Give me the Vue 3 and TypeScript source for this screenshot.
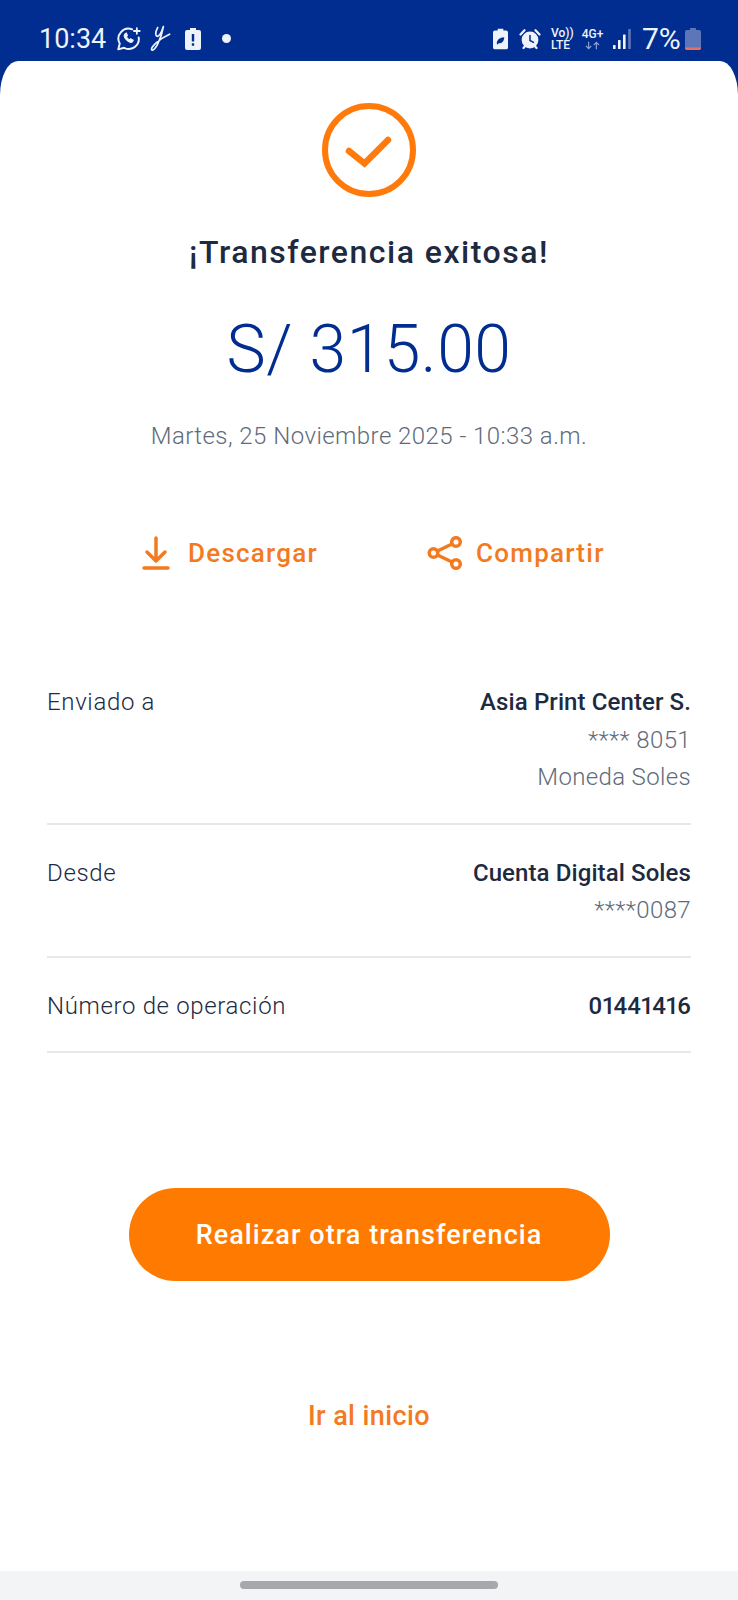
<script setup lang="ts">
interface DetailRow {
  label: string
  strong: string
  lines: string[]
}

const rows: DetailRow[] = [
  { label: 'Enviado a', strong: 'Asia Print Center S.', lines: ['**** 8051', 'Moneda Soles'] },
  { label: 'Desde', strong: 'Cuenta Digital Soles', lines: ['****0087'] },
  { label: 'Número de operación', strong: '01441416', lines: [] },
]
</script>

<template>
  <div class="screen">
    <header class="status">
      <div class="status-left">
        <span class="clock">10:34</span>
        <svg class="ic-wa" viewBox="0 0 24 24" fill="none" stroke="currentColor" stroke-width="1.9" stroke-linejoin="round" stroke-linecap="round">
          <path d="M15.5 3.2A9.6 9.6 0 0 0 3.6 16.8L2.2 22.4l5.6-1.5A9.6 9.6 0 0 0 21.8 11" />
          <path d="M8.6 7.6c-1.3 1-1.1 3 1.2 5.5 2.4 2.5 4.6 3.1 6 2l.8-1.5-2.6-1.4-1 1c-1.2-.4-2.5-1.7-3-3l1-1-1-2.6z" fill="currentColor" stroke-width="1" />
          <path d="M20 2v5.5M17.2 4.8h5.6" stroke-width="1.7" />
        </svg>
        <svg class="ic-y" viewBox="0 0 22 28" fill="none" stroke="currentColor" stroke-width="1.8" stroke-linecap="round" stroke-linejoin="round">
          <path d="M8 2.5C6.2 6 5.5 10 7 11.5c2 1.3 5-3 7-10-1.2 7.5-3.5 13.5-6 18.5-1.5 3-4.5 7-6 6-1.3-1 1-4.5 5-8 3.5-3 8-6 13.5-8.5" />
        </svg>
        <svg class="ic-batt" viewBox="0 0 16 22">
          <path d="M5 0h6v2h3a2 2 0 0 1 2 2v16a2 2 0 0 1-2 2H2a2 2 0 0 1-2-2V4a2 2 0 0 1 2-2h3z" fill="currentColor" />
          <rect x="6.8" y="6" width="2.4" height="7.5" rx="0.6" fill="#002d8f" />
          <rect x="6.8" y="15.2" width="2.4" height="2.6" rx="0.6" fill="#002d8f" />
        </svg>
        <span class="dot"></span>
      </div>
      <div class="status-right">
        <svg class="ic-saver" viewBox="0 0 16 22">
          <path d="M5 0h6v2h3a2 2 0 0 1 2 2v16a2 2 0 0 1-2 2H2a2 2 0 0 1-2-2V4a2 2 0 0 1 2-2h3z" fill="currentColor" />
          <path d="M4 15.5c.4-4 2.8-6 8-6.5-.3 4.5-2.6 6.8-6 6.5l-1.2 1.5z" fill="#002d8f" />
        </svg>
        <svg class="ic-alarm" viewBox="0 0 22 22">
          <circle cx="11" cy="12" r="8.4" fill="currentColor" />
          <path d="M11 7.5V12.5l3.5 1.8" fill="none" stroke="#002d8f" stroke-width="1.5" stroke-linecap="round" />
          <path d="M1.5 6.5 5.5 2.2M20.5 6.5 16.5 2.2M4.5 20l1.5-1.7M17.5 20 16 18.3" fill="none" stroke="currentColor" stroke-width="2.2" stroke-linecap="round" />
        </svg>
        <div class="net-volte"><span>Vo))</span><span>LTE</span></div>
        <div class="net-4g">
          <span>4G+</span>
          <svg viewBox="0 0 22 10" fill="none" stroke="#8fa3d6" stroke-width="1.5">
            <path d="M6 0v9M2.5 5.5 6 9l3.5-3.5M16 10V1M12.5 4.5 16 1l3.5 3.5" />
          </svg>
        </div>
        <svg class="ic-signal" viewBox="0 0 18 20">
          <rect x="0" y="16" width="2.6" height="4" rx="0.6" fill="#f2f5fc" />
          <rect x="5" y="11" width="2.6" height="9" rx="0.6" fill="#f2f5fc" />
          <rect x="10" y="5.5" width="2.6" height="14.5" rx="0.6" fill="#f2f5fc" />
          <rect x="15.2" y="0" width="2.6" height="20" rx="0.6" fill="#5d76b8" />
        </svg>
        <span class="pct">7%</span>
        <svg class="ic-level" viewBox="0 0 16 22">
          <path d="M5 0h6v2h3a2 2 0 0 1 2 2v16a2 2 0 0 1-2 2H2a2 2 0 0 1-2-2V4a2 2 0 0 1 2-2h3z" fill="#5d76b8" />
          <path d="M0 19.5h16V20a2 2 0 0 1-2 2H2a2 2 0 0 1-2-2z" fill="#ec6f5c" />
        </svg>
      </div>
    </header>

    <main class="card">
      <svg class="ok" viewBox="0 0 94 94" fill="none" stroke="#ff7a0a" stroke-linecap="round" stroke-linejoin="miter">
        <circle cx="47" cy="47" r="44" stroke-width="6" />
        <path d="M27 48 42.5 60.5 66 37" stroke-width="6.5" />
      </svg>
      <h1 class="title">¡Transferencia exitosa!</h1>
      <div class="amount">S/ 315.00</div>
      <div class="date">Martes, 25 Noviembre 2025 - 10:33 a.m.</div>

      <div class="actions">
        <a class="action action-down">
          <svg viewBox="0 0 28 34" fill="none" stroke="currentColor" stroke-width="3.5" stroke-linecap="round" stroke-linejoin="round">
            <path d="M14 2v23M5 16l9 9 9-9" />
            <path d="M2 32h24" />
          </svg>
          <span>Descargar</span>
        </a>
        <a class="action action-share">
          <svg viewBox="0 0 36 34" fill="none" stroke="currentColor" stroke-width="3.5">
            <circle cx="6.5" cy="17" r="4.3" />
            <circle cx="29" cy="6" r="4.3" />
            <circle cx="29" cy="28" r="4.3" />
            <path d="M10.5 15 25 8M10.5 19 25 26" />
          </svg>
          <span>Compartir</span>
        </a>
      </div>

      <section class="details">
        <div v-for="row in rows" :key="row.label" class="row">
          <span class="row-label">{{ row.label }}</span>
          <div class="row-values">
            <strong>{{ row.strong }}</strong>
            <span v-for="line in row.lines" :key="line">{{ line }}</span>
          </div>
        </div>
      </section>

      <button class="primary">Realizar otra transferencia</button>
      <a class="home">Ir al inicio</a>
    </main>

    <footer class="navbar"><span class="pill"></span></footer>
  </div>
</template>

<style>
html, body { background: #fff; }
</style>

<style scoped>
.screen {
  width: 738px;
  height: 1600px;
  display: flex;
  flex-direction: column;
  background: #002d8f;
  font-family: Roboto, "Liberation Sans", sans-serif;
  overflow: hidden;
}

.status {
  height: 61px;
  flex: none;
  display: flex;
  justify-content: space-between;
  align-items: center;
  padding: 16px 37px 0 39px;
  box-sizing: border-box;
  color: #eef2fb;
}
.status-left, .status-right { display: flex; align-items: center; }
.clock { font-size: 27px; width: 77px; }
.ic-wa { width: 25px; height: 25px; }
.ic-y { width: 21px; height: 27px; margin-left: 9px; }
.ic-batt { width: 16px; height: 22px; margin-left: 14px; }
.dot { width: 9px; height: 9px; border-radius: 50%; background: #eef2fb; margin-left: 21px; }

.ic-saver { width: 15px; height: 22px; }
.ic-alarm { width: 22px; height: 22px; margin-left: 11px; }
.net-volte {
  display: flex;
  flex-direction: column;
  width: 21px;
  margin-left: 10px;
  font-size: 12px;
  font-weight: 500;
  line-height: 12px;
  white-space: nowrap;
}
.net-4g {
  display: flex;
  flex-direction: column;
  align-items: center;
  width: 23px;
  margin-left: 9px;
  font-size: 12px;
  font-weight: 500;
  line-height: 12px;
}
.net-4g svg { width: 17px; height: 9px; margin-top: 1px; }
.ic-signal { width: 18px; height: 20px; margin-left: 9px; }
.pct { font-size: 30px; margin-left: 11px; width: 43px; }
.ic-level { width: 16px; height: 22px; }

.card {
  flex: 1;
  display: flex;
  flex-direction: column;
  align-items: center;
  background: #fff;
  border-radius: 18px 18px 0 0 / 34px 34px 0 0;
}
.ok { width: 94px; height: 94px; margin-top: 42px; }
.title {
  margin: 35px 0 0;
  font-size: 32px;
  line-height: 40px;
  font-weight: 500;
  letter-spacing: 1.5px;
  color: #1d2a3f;
}
.amount {
  margin-top: 38px;
  font-size: 66px;
  line-height: 80px;
  font-weight: 300;
  color: #002d8f;
  letter-spacing: 0.5px;
}
.date {
  margin-top: 30px;
  font-size: 24px;
  line-height: 32px;
  font-weight: 300;
  color: #5f6b7a;
  letter-spacing: 0.45px;
}

.actions {
  margin-top: 84px;
  width: 100%;
  display: flex;
  padding-left: 142px;
  box-sizing: border-box;
}
.action {
  display: flex;
  align-items: center;
  color: #f47a1f;
  font-size: 26px;
  font-weight: 500;
  letter-spacing: 1.25px;
}
.action-down svg { width: 28px; height: 34px; margin-right: 18px; }
.action-share { margin-left: 109px; }
.action-share svg { width: 36px; height: 34px; margin-right: 13px; }

.details {
  margin-top: 84px;
  width: 100%;
  padding: 0 47px;
  box-sizing: border-box;
}
.row {
  display: flex;
  justify-content: space-between;
  padding: 30px 0 26px;
  border-bottom: 2px solid #e6e8ea;
}
.row-label {
  font-size: 24px;
  line-height: 37px;
  font-weight: 300;
  letter-spacing: 0.65px;
  color: #1d2a3f;
}
.row-values {
  display: flex;
  flex-direction: column;
  align-items: flex-end;
  font-size: 24px;
  line-height: 37.5px;
  font-weight: 300;
  letter-spacing: 0.35px;
  color: #5f6b7a;
}
.row-values strong {
  font-weight: 500;
  letter-spacing: 0.1px;
  font-variant-numeric: proportional-nums;
  color: #1d2a3f;
}

.primary {
  margin-top: 135px;
  width: 481px;
  height: 93px;
  flex: none;
  border: none;
  border-radius: 47px;
  background: #ff7a00;
  color: #fff;
  font-family: inherit;
  font-size: 27px;
  font-weight: 500;
  letter-spacing: 1.05px;
}
.home {
  margin-top: 117px;
  font-size: 27px;
  line-height: 36px;
  font-weight: 500;
  letter-spacing: 0.4px;
  color: #f47a1f;
}

.navbar {
  height: 29px;
  flex: none;
  display: flex;
  justify-content: center;
  padding-top: 10px;
  box-sizing: border-box;
  background: #f3f4f6;
}
.pill { width: 258px; height: 8px; border-radius: 4px; background: #a6a8ac; }
</style>
